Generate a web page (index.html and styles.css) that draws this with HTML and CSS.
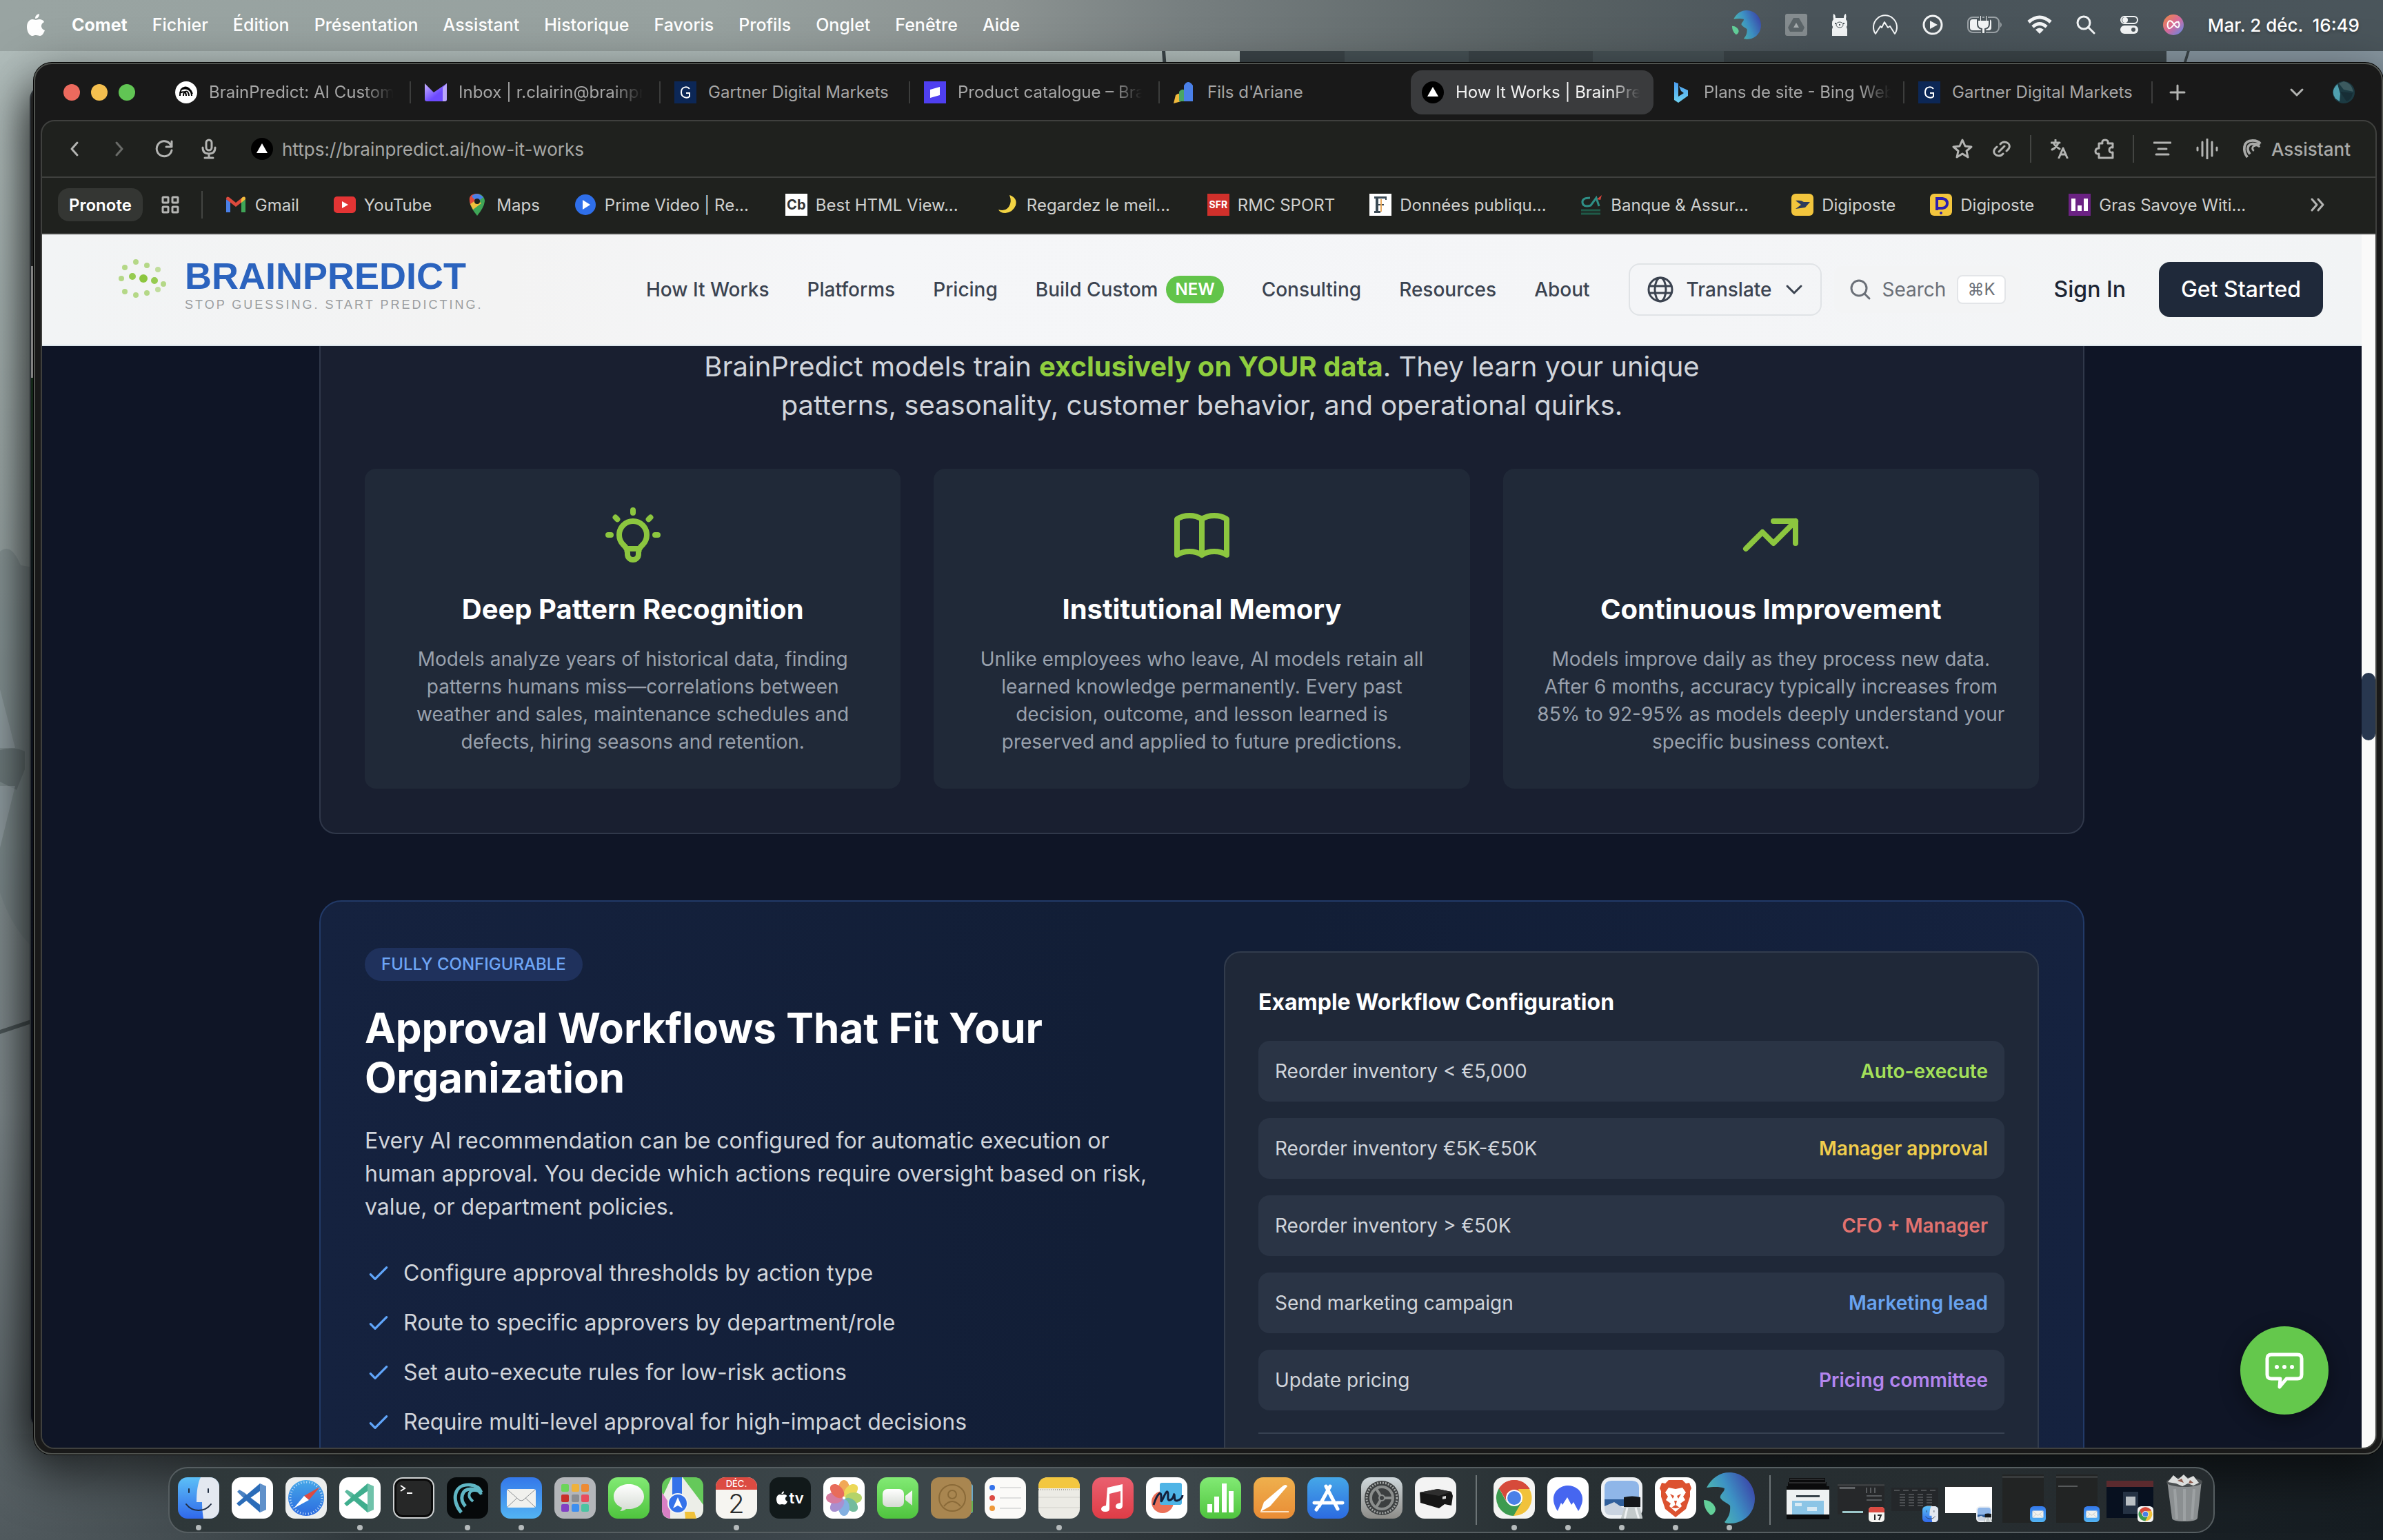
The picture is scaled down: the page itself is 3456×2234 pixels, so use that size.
FILE: index.html
```html
<!DOCTYPE html>
<html lang="fr">
<head>
<meta charset="utf-8">
<title>How It Works | BrainPredict</title>
<link rel="stylesheet" href="styles.css">
</head>
<body>

<svg class="defs" aria-hidden="true">
  <defs>
    <linearGradient id="g-blue" x1="0" y1="0" x2="0" y2="1"><stop offset="0" stop-color="#3478ea"/><stop offset="1" stop-color="#53b4f3"/></linearGradient>
    <linearGradient id="g-finder" x1="0" y1="0" x2="0" y2="1"><stop offset="0" stop-color="#5cc0f7"/><stop offset="1" stop-color="#3068ea"/></linearGradient>
    <linearGradient id="g-sky" x1="0" y1="0" x2="0" y2="1"><stop offset="0" stop-color="#45a7e8"/><stop offset="1" stop-color="#2c6be0"/></linearGradient>
    <linearGradient id="g-green" x1="0" y1="0" x2="0" y2="1"><stop offset="0" stop-color="#82ea74"/><stop offset="1" stop-color="#4fc43e"/></linearGradient>
    <linearGradient id="g-white" x1="0" y1="0" x2="0" y2="1"><stop offset="0" stop-color="#ffffff"/><stop offset="1" stop-color="#d5dbd3"/></linearGradient>
    <linearGradient id="g-red" x1="0" y1="0" x2="0" y2="1"><stop offset="0" stop-color="#ea6070"/><stop offset="1" stop-color="#df3c46"/></linearGradient>
    <linearGradient id="g-orange" x1="0" y1="0" x2="0" y2="1"><stop offset="0" stop-color="#efb04d"/><stop offset="1" stop-color="#e98c35"/></linearGradient>
    <linearGradient id="g-grey" x1="0" y1="0" x2="0" y2="1"><stop offset="0" stop-color="#cfd8dc"/><stop offset="1" stop-color="#8d8c88"/></linearGradient>
    <linearGradient id="g-comet" x1="0" y1=".7" x2="1" y2=".2"><stop offset="0" stop-color="#54c5a8"/><stop offset=".5" stop-color="#3d92c4"/><stop offset="1" stop-color="#3b3fa6"/></linearGradient>
    <linearGradient id="g-proton" x1="0" y1="0" x2="1" y2="1"><stop offset="0" stop-color="#c9b4ff"/><stop offset=".6" stop-color="#6d4aff"/></linearGradient>
    <linearGradient id="g-bing" x1="0" y1="0" x2="0" y2="1"><stop offset="0" stop-color="#4a9df0"/><stop offset="1" stop-color="#6fd3f2"/></linearGradient>
    <linearGradient id="g-siri" x1="0" y1="0" x2="1" y2="1"><stop offset="0" stop-color="#ef8b3c"/><stop offset=".5" stop-color="#d86a9c"/><stop offset="1" stop-color="#5a8ff0"/></linearGradient>
    <symbol id="comet-ball" viewBox="0 0 74 74">
      <path d="M4 22C12 7 24 0 37 0c21 0 37 17 37 38S58 74 38 74c-3 0-6 0-8-2 6-7 9-14 8-24-4-4-10-5-14-11-1-6 6-8 6-14-8-3-18-2-26-1z" fill="url(#g-comet)"/>
      <path d="M0 40c9 0 16 6 17 13 0 4-3 8-7 9C4 57 0 50 0 40z" fill="#63d09a"/>
    </symbol>
    <symbol id="swoosh" viewBox="0 0 32 32">
      <g fill="none" stroke="currentColor" stroke-width="4" stroke-linecap="butt"><path d="M10 29C3 20 2 3 18 3c6 0 10 2 12 5"/><path d="M14 24C8 17 10 9 18 8c5 0 8 0 11 2"/><path d="M20 19c-4-3-2-7 1-8s5-1 8 2" stroke-width="3"/></g>
    </symbol>
    <symbol id="vercel" viewBox="0 0 32 32"><circle cx="16" cy="16" r="16" fill="#000"/><path d="M16 8l8 14H8z" fill="#fff"/></symbol>
    <symbol id="gartner" viewBox="0 0 32 32"><path d="M0 0h32v32H0z" fill="#0c2756"/><path d="M22 11c-3-4-12-4-12 5 0 8 9 9 12 6v-5h-5" fill="none" stroke="#fff" stroke-width="2"/></symbol>
    <symbol id="apple" viewBox="0 0 26 32"><path d="M18 8c3 0 6 1 7 4-6 3-5 10 1 12-2 5-4 8-7 8-2 0-3-1-6-1s-3 1-5 1C3 32 0 25 0 19 0 12 4 8 8 8c2 0 4 1 5 1s3-1 5-1zM18 0c0 4-2 7-6 7 0-4 2-6 6-7z" fill="currentColor"/></symbol>
    <symbol id="vscode" viewBox="0 0 60 60"><rect width="60" height="60" rx="14" fill="#fff"/><path d="M41 9l9 4v34l-9 4-24-22 3-4 21 15V20L20 35 11 42l-4-4L41 9z" fill="currentColor"/><path d="M11 18l-3 3 12 12 21 18V40L18 22z" fill="currentColor" opacity=".85"/><path d="M41 9l9 4v34l-9 4z" fill="#fff" opacity=".25"/></symbol>
    <symbol id="mail" viewBox="0 0 60 60"><rect width="60" height="60" rx="14" fill="url(#g-blue)"/><rect x="9" y="17" width="42" height="27" rx="3" fill="#f1f1ee"/><path d="M10 18l17 15q3 2 6 0l17-15M10 43l14-13M50 43L36 30" fill="none" stroke="#8c9093" stroke-width="1"/></symbol>
    <symbol id="finder" viewBox="0 0 60 60"><rect width="60" height="60" rx="14" fill="url(#g-finder)"/><path d="M33 0h13c8 0 14 6 14 14v32c0 8-6 14-14 14H37c-1-8-2-14-2-24h-8C27 20 29 8 33 0z" fill="#e3e8f0"/><path d="M16 17v5M44 17v5M12 39c9 12 27 12 36 0" fill="none" stroke="#1f2c40" stroke-width="2" stroke-linecap="round"/></symbol>
    <symbol id="chrome" viewBox="0 0 60 60"><rect width="60" height="60" rx="14" fill="#f4f4f2"/><path d="M30 30L7.500 17A26 26 0 0 1 52.500 17z" fill="#d64a3a"/><path d="M8 16A26 26 0 0 0 30 56l11-20H19z" fill="#3d9b50"/><path d="M52 17A26 26 0 0 1 29 56l12-20-5-19z" fill="#f1c23b"/><path d="M30 17h22.500A26 26 0 0 0 8 16l11 19z" fill="#d64a3a"/><circle cx="30" cy="30" r="12" fill="#fff"/><circle cx="30" cy="30" r="10" fill="#4a80e8"/></symbol>
    <symbol id="preview" viewBox="0 0 60 60"><rect width="60" height="60" rx="14" fill="#eef1f4"/><path d="M5 15Q5 5 15 5h30q10 0 10 10v20H5z" fill="#8fb6e8"/><path d="M5 32h50v10H5z" fill="#2f5f9c"/><path d="M5 42l14-6 12 8 24-4v6q0 9-10 9H15Q5 55 5 46z" fill="#c9d3e0"/><path d="M33 29q12-3 24 0v14H33z" fill="#15181b"/><path d="M34 43h22l5 19q-15 4-33 0z" fill="#c3cacb"/><path d="M38 44l-4 17M50 44l5 17" stroke="#eef1f2" stroke-width="3"/></symbol>
  </defs>
</svg>

<svg class="wallpaper" viewBox="0 0 3456 2234" preserveAspectRatio="none" aria-hidden="true">
  <defs>
    <linearGradient id="w-sky" x1="0" y1="0" x2="0" y2="1"><stop offset="0" stop-color="#b3bfbd"/><stop offset=".3" stop-color="#9ba7a6"/><stop offset=".5" stop-color="#8a9697"/><stop offset=".58" stop-color="#808b8d"/><stop offset=".72" stop-color="#7d878a"/><stop offset="1" stop-color="#50595d"/></linearGradient>
    <linearGradient id="w-floor" x1="0" y1="0" x2="1" y2="0"><stop offset="0" stop-color="#3d464a" stop-opacity="0"/><stop offset=".15" stop-color="#30383c"/><stop offset=".35" stop-color="#3d464c"/><stop offset=".55" stop-color="#242b2e"/><stop offset="1" stop-color="#161d22"/></linearGradient>
  </defs>
  <path d="M0 0h3456v2234H0z" fill="url(#w-sky)"/>
  <path d="M0 800q16-14 30 20l30 5v560q-40-30-60-90z" fill="#6f7c80" opacity=".4"/>
  <path d="M0 1088q20-6 36 2v26l-12 30-24-12z" fill="#515d60" opacity=".4"/>
  <path d="M0 1000l22 85H0zM0 1140l22 0L0 1230z" fill="#a0acb2" opacity=".5"/>
  <path d="M0 1494l60-20v6L0 1500z" fill="#4b5557"/>
  <path d="M1798 60h1344v40H1798z" fill="#3b4448"/>
  <path d="M1950 60h180v40h-180zM2310 60h190v40h-190z" fill="#465155"/>
  <path d="M3142 60h314v300h-314z" fill="#8796a0"/>
  <path d="M1684 60h5l3 40h-5zM3176 60h4l-12 40h-4z" fill="#3b4448"/>
  <path d="M0 2080h3456v154H0z" fill="url(#w-floor)"/>
</svg>

<div class="desktop">
  <header class="menubar">
    <nav class="menus" aria-label="Menus">
      <button aria-label="Apple"><svg class="apple" viewBox="0 0 26 32"><use href="#apple"/></svg></button>
      <button class="strong">Comet</button>
      <button>Fichier</button>
      <button>Édition</button>
      <button>Présentation</button>
      <button>Assistant</button>
      <button>Historique</button>
      <button>Favoris</button>
      <button>Profils</button>
      <button>Onglet</button>
      <button>Fenêtre</button>
      <button>Aide</button>
    </nav>
    <div class="status">
      <svg width="42" height="42"><use href="#comet-ball"/></svg>
      <svg width="32" height="32" viewBox="0 0 32 32"><rect width="32" height="32" rx="3" fill="#858c8f"/><path d="M12 6h8l8 14-3 6H7l-3-6z" fill="#5b6468"/><path d="M16 13l4 7h-8z" fill="#a6acae"/></svg>
      <svg width="24" height="34" viewBox="0 0 24 34" fill="#f2f4f5"><path d="M3 1q3 1 3 6h12q0-5 3-6 1 4 0 8 2 2 2 6v3q-2 2 0 5v10H1V23q2-3 0-5v-3q0-4 2-6-1-4 0-8z"/><ellipse cx="12" cy="17" rx="5" ry="4" fill="none" stroke="#4c565b" stroke-width="1"/><path d="M5 14h2v2H5zM17 14h2v2h-2zM11 16h2v2h-2z" fill="#4c565b"/></svg>
      <svg width="38" height="30" viewBox="0 0 38 30" fill="none" stroke="#f2f4f5" stroke-width="2"><path d="M5 28A17 17 0 1 1 33 28L26 17l-3 2-5-8-4 8-2-2z" stroke-linejoin="round"/></svg>
      <svg width="30" height="30" viewBox="0 0 30 30"><circle cx="15" cy="15" r="13" fill="none" stroke="#f2f4f5" stroke-width="3"/><path d="M11 9l11 6-11 6z" fill="#f2f4f5"/></svg>
      <svg width="52" height="30" viewBox="0 0 52 30"><rect x="1" y="4" width="45" height="22" rx="7" fill="none" stroke="#9ba2a6" stroke-width="2"/><path d="M48 11q4 4 0 8z" fill="#9ba2a6"/><rect x="4" y="7" width="31" height="16" rx="4" fill="#f2f4f5"/><path d="M18 1v7h-3v6q0 6 6 7v7h5v-7q6-1 6-7V8h-3V1h-3v7h-5V1z" fill="#f2f4f5" stroke="#4c565b" stroke-width="2"/></svg>
      <svg width="36" height="28" viewBox="0 0 36 28" fill="none" stroke="#f2f4f5" stroke-width="5"><path d="M2 10q16-14 32 0M8 17q10-9 20 0"/><path d="M12 21q6-5 12 0l-6 6z" fill="#f2f4f5" stroke="none"/></svg>
      <svg width="28" height="28" viewBox="0 0 28 28" fill="none" stroke="#f2f4f5" stroke-width="3"><circle cx="11" cy="11" r="9"/><path d="M18 18l8 8" stroke-linecap="round"/></svg>
      <svg width="28" height="28" viewBox="0 0 28 28"><rect x="2" y="2" width="24" height="10" rx="5" fill="none" stroke="#f2f4f5" stroke-width="2"/><circle cx="8" cy="7" r="4" fill="#f2f4f5"/><rect x="1" y="15" width="26" height="12" rx="6" fill="#f2f4f5"/><circle cx="20" cy="21" r="3" fill="#4c565b"/></svg>
      <svg width="30" height="30" viewBox="0 0 30 30"><circle cx="15" cy="15" r="15" fill="url(#g-siri)"/><path d="M8 10c6-4 8 9 14 9M8 20c6 2 8-11 14-9M8 10q-3 5 0 10M22 10q3 5 0 9" fill="none" stroke="#fff" stroke-width="2"/></svg>
      <time>Mar. 2 déc.&ensp;16:49</time>
    </div>
  </header>

  <main class="stage">
    <div class="back-window" aria-hidden="true"></div>
    <section class="window">
      <div class="tabstrip">
        <div class="lights"><button class="red" aria-label="Fermer"></button><button class="amber" aria-label="Réduire"></button><button class="lime" aria-label="Agrandir"></button></div>
        <div class="tabs">
          <button class="tab ruled"><svg viewBox="0 0 32 32"><circle cx="16" cy="16" r="16" fill="#fff"/><path d="M7 21C6 6 20 4 25 18M12 21c0-8 7-9 8 0M8 12c8-4 16 0 16 9M7 17c6-4 9-1 9 4" fill="none" stroke="#000" stroke-width="2"/></svg><span>BrainPredict: AI Custom</span></button>
          <button class="tab ruled"><svg viewBox="0 0 32 32"><path d="M0 3l13 13L32 3v23q0 3-3 3H3q-3 0-3-3z" fill="url(#g-proton)"/><path d="M26 9l6-6v23q0 3-3 3h-3z" fill="#b9a5fb"/></svg><span>Inbox | r.clairin@brainpr</span></button>
          <button class="tab ruled whole"><svg viewBox="0 0 32 32"><use href="#gartner"/></svg><span>Gartner Digital Markets</span></button>
          <button class="tab ruled"><svg viewBox="0 0 32 32"><path d="M0 0h32v32H0z" fill="#4f3ff0"/><path d="M9 12l14-4v12L9 24z" fill="#fff"/></svg><span>Product catalogue – Bra</span></button>
          <button class="tab whole"><svg viewBox="0 0 32 32"><path d="M0 32l3-12q5-4 8-1v10z" fill="#f0b93c"/><path d="M8 29V15q5-6 9-1v15z" fill="#4aa564"/><path d="M15 29V6q6-10 13 0v23z" fill="#4a80e8"/></svg><span>Fils d'Ariane</span></button>
          <button class="tab active"><svg viewBox="0 0 32 32"><use href="#vercel"/></svg><span>How It Works | BrainPre</span></button>
          <button class="tab ruled"><svg viewBox="0 0 32 32"><path d="M6 1l6 2v19l8-5-4-3-3-7 13 6v8L12 31l-6-4z" fill="url(#g-bing)"/></svg><span>Plans de site - Bing Web</span></button>
          <button class="tab ruled whole"><svg viewBox="0 0 32 32"><use href="#gartner"/></svg><span>Gartner Digital Markets</span></button>
        </div>
        <button class="icon" aria-label="Nouvel onglet"><svg width="24" height="24" viewBox="0 0 24 24"><path d="M12 2v20M2 12h20"/></svg></button>
        <button class="icon push" aria-label="Onglets"><svg width="24" height="24" viewBox="0 0 24 24"><path d="M4 8l8 8 8-8"/></svg></button>
        <button class="icon profile" aria-label="Profil"><svg width="32" height="32" viewBox="0 0 32 32"><g stroke="none"><circle cx="16" cy="16" r="16" fill="#1c3a42"/><path d="M7 4Q-4 14 4 25l6 4 1-11z" fill="#4f9fae"/><path d="M9 3l7 9 14 3Q27 2 16 0z" fill="#3c5a5f"/><path d="M11 15l18 2q-2 10-9 12z" fill="#172e36"/></g></svg></button>
      </div>

      <div class="chrome">
        <div class="toolbar">
          <button class="icon" aria-label="Précédent"><svg width="24" height="24" viewBox="0 0 24 24"><path d="M16 3l-8 9 8 9"/></svg></button>
          <button class="icon dim" aria-label="Suivant"><svg width="24" height="24" viewBox="0 0 24 24"><path d="M8 3l8 9-8 9"/></svg></button>
          <button class="icon" aria-label="Recharger"><svg width="26" height="26" viewBox="0 0 26 26"><path d="M24 15A11 11 0 1 1 21 5l3 4M24 2v8h-8"/></svg></button>
          <button class="icon" aria-label="Micro"><svg width="24" height="30" viewBox="0 0 24 30"><rect x="8" y="2" width="8" height="15" rx="4"/><path d="M3 13q0 9 9 9t9-9M12 22v6M6 28h12"/></svg></button>
          <label class="address"><svg width="32" height="32"><use href="#vercel"/></svg><input type="url" aria-label="Adresse" value="https://brainpredict.ai/how-it-works"></label>
          <button class="icon tight" aria-label="Favori"><svg width="30" height="30" viewBox="0 0 30 30"><path d="M15 2l4 9 9 1-7 6 2 9-8-5-8 5 2-9-7-6 9-1z"/></svg></button>
          <button class="icon" aria-label="Copier le lien"><svg width="26" height="26" viewBox="0 0 26 26"><path d="M9 17l8-8M11 6c5-6 15-2 13 5-1 3-3 4-4 5M15 20c-5 6-15 2-13-5 1-3 3-4 4-5"/></svg></button>
          <i class="rule"></i>
          <button class="icon" aria-label="Traduire"><svg width="26" height="28" viewBox="0 0 26 28"><path d="M1 5h12M7 1v4M11 5q-2 7-9 10M4 5q2 5 9 9M12 27l6-14 6 14M14 22h8"/></svg></button>
          <button class="icon" aria-label="Extensions"><svg width="30" height="30" viewBox="0 0 30 30"><path d="M7 7h5q-1-5 4-5t4 5h7v6q-5-1-5 3.500T27 20v8H7v-6q-5 1-5-3.500T7 14z"/></svg></button>
          <i class="rule"></i>
          <button class="icon" aria-label="Résumer"><svg width="26" height="24" viewBox="0 0 26 24"><path d="M1 3h24M7 12h12M4 20h18"/></svg></button>
          <button class="icon" aria-label="Voix"><svg width="32" height="30" viewBox="0 0 32 30"><path d="M2 13v4M9 5v20M16 1v28M23 5v20M30 13v4"/></svg></button>
          <button class="assistant"><svg width="30" height="30"><use href="#swoosh"/></svg>Assistant</button>
        </div>
        <nav class="bookmarks" aria-label="Favoris">
          <button class="pill">Pronote</button>
          <button class="icon" aria-label="Applications"><svg width="26" height="26" viewBox="0 0 26 26"><rect x="2" y="2" width="8" height="8" rx="1"/><rect x="16" y="2" width="8" height="8" rx="1"/><rect x="2" y="16" width="8" height="8" rx="1"/><rect x="16" y="16" width="8" height="8" rx="1"/></svg></button>
          <i class="rule"></i>
          <a href="#"><svg viewBox="0 0 32 32"><path d="M2 27V8l6 4v15z" fill="#4a80e8"/><path d="M24 27V12l6-4v19z" fill="#3fa557"/><path d="M2 8q0-5 4-3l10 8 10-8q4-2 4 3l-14 11z" fill="#dd4a3d"/><path d="M24 7l2-2q4-2 4 3l-6 5z" fill="#f0bf3c"/></svg><span>Gmail</span></a>
          <a href="#"><svg viewBox="0 0 32 32"><rect y="4" width="32" height="24" rx="5" fill="#e33434"/><path d="M12 11l9 5-9 5z" fill="#fff"/></svg><span>YouTube</span></a>
          <a href="#"><svg viewBox="0 0 32 32"><path d="M16 32Q6 20 5 11A11 11 0 0 1 27 11Q26 20 16 32z" fill="#3fa557"/><path d="M6 15Q1 0 16 0l4 1L8 19z" fill="#e0483c"/><path d="M8 4q7-8 17 1l-9 7z" fill="#4a80e8"/><path d="M6 15l10-7 6 6-12 9z" fill="#f0bf3c"/><circle cx="16" cy="11" r="4" fill="#1f211f"/></svg><span>Maps</span></a>
          <a href="#"><svg viewBox="0 0 32 32"><circle cx="16" cy="16" r="15" fill="#2f6fea"/><path d="M12 9l11 7-11 7z" fill="#fff"/></svg><span class="cut">Prime Video | Re...</span></a>
          <a href="#"><i class="cb">Cb</i><span class="cut">Best HTML View...</span></a>
          <a href="#"><svg viewBox="0 0 32 32"><path d="M19 2q12 4 9 15-4 10-15 11-8 0-10-5 10 3 15-4t1-17z" fill="#f3d443"/></svg><span class="cut">Regardez le meil...</span></a>
          <a href="#"><i class="sfr">SFR</i><span>RMC SPORT</span></a>
          <a href="#"><svg viewBox="0 0 32 32"><path d="M0 0h32v32H0z" fill="#fff"/><path d="M7 4h18v5h-2V7H13v8h8v2h-8v8h3v3H7v-3h2V7H7z" fill="#3a4a55"/><path d="M17 8v18" stroke="#e9a85a" stroke-width="2"/></svg><span class="cut">Données publiqu...</span></a>
          <a href="#"><svg viewBox="0 0 32 32"><path d="M14 6Q2 6 3 13t12 4l8-11 4 12" fill="none" stroke="#2f8f86" stroke-width="3"/><path d="M24 8l7-6-2 7z" fill="#d8443c"/><path d="M1 24h28M1 29h28" stroke="#1f5a48" stroke-width="3"/></svg><span class="cut">Banque &amp; Assur...</span></a>
          <a href="#"><svg viewBox="0 0 32 32"><rect width="32" height="32" rx="6" fill="#f2c53d"/><path d="M6 10q8-1 12 2h9l-7 8-14 2 8-6z" fill="#2d3a5c"/></svg><span>Digiposte</span></a>
          <a href="#"><svg viewBox="0 0 32 32"><rect width="32" height="32" rx="6" fill="#f2c53d"/><path d="M10 24V7h8q7 1 7 7t-7 7h-6" fill="none" stroke="#2b1fb0" stroke-width="4"/><circle cx="16" cy="28" r="2" fill="#2b1fb0"/></svg><span>Digiposte</span></a>
          <a href="#"><svg viewBox="0 0 32 32"><path d="M0 0h32v32H0z" fill="#6b2283"/><path d="M4 7h6v18H4zM13 17h6v8h-6zM22 7h6v18h-6z" fill="#fff"/></svg><span>Gras Savoye Witi...</span></a>
          <button class="icon push more" aria-label="Plus de favoris"><svg width="24" height="24" viewBox="0 0 24 24"><path d="M4 4l7 8-7 8M13 4l7 8-7 8"/></svg></button>
        </nav>

        <div class="viewport">
          <article class="page" lang="en">
            <header class="site">
              <a class="brand" href="#">
                <svg width="70" height="60" viewBox="0 0 70 60" fill="#8cc63f"><g opacity=".6"><circle cx="25" cy="6" r="4"/><circle cx="41" cy="11" r="4"/><circle cx="9" cy="14" r="4"/><circle cx="57" cy="17" r="4" opacity=".8"/><circle cx="4" cy="30" r="4"/><circle cx="65" cy="38" r="4"/><circle cx="57" cy="46" r="4" opacity=".8"/><circle cx="9" cy="49" r="4"/><circle cx="25" cy="54" r="4"/><circle cx="41" cy="51" r="4"/></g><circle cx="20" cy="27" r="5" opacity=".9"/><circle cx="36" cy="30" r="6"/><circle cx="52" cy="33" r="5" opacity=".9"/></svg>
                <span class="words"><b>BRAINPREDICT</b><small>STOP GUESSING. START PREDICTING.</small></span>
              </a>
              <nav class="sitenav" aria-label="Site">
                <a href="#">How It Works</a>
                <a href="#">Platforms</a>
                <a href="#">Pricing</a>
                <a href="#">Build Custom<em>NEW</em></a>
                <a href="#">Consulting</a>
                <a href="#">Resources</a>
                <a href="#">About</a>
              </nav>
              <button class="translate"><svg width="40" height="40" viewBox="0 0 40 40" stroke-width="3"><circle cx="20" cy="20" r="17"/><ellipse cx="20" cy="20" rx="8" ry="17"/><path d="M4 15h32M4 25h32"/></svg>Translate<svg width="28" height="28" viewBox="0 0 28 28" stroke-width="3"><path d="M4 9l10 10 10-10"/></svg></button>
              <button class="search"><svg width="32" height="32" viewBox="0 0 32 32" stroke-width="3"><circle cx="14" cy="14" r="11"/><path d="M22 22l7 7"/></svg>Search<kbd>⌘K</kbd></button>
              <a class="signin" href="#">Sign In</a>
              <button class="start">Get Started</button>
            </header>

            <div class="sections">
              <section class="learn">
                <p class="lead">BrainPredict models train <strong>exclusively on YOUR data</strong>. They learn your unique patterns, seasonality, customer behavior, and operational quirks.</p>
                <div class="features">
                  <div class="feature">
                    <svg viewBox="0 0 24 24"><path d="M9.663 17h4.673M12 3v1m6.364 1.636l-.707.707M21 12h-1M4 12H3m3.343-5.657l-.707-.707m2.828 9.900a5 5 0 117.072 0l-.548.547A3.374 3.374 0 0014 18.469V19a2 2 0 11-4 0v-.531c0-.895-.356-1.754-.988-2.386l-.548-.547z"/></svg>
                    <h3>Deep Pattern Recognition</h3>
                    <p>Models analyze years of historical data, finding patterns humans miss—correlations between weather and sales, maintenance schedules and defects, hiring seasons and retention.</p>
                  </div>
                  <div class="feature">
                    <svg viewBox="0 0 24 24"><path d="M12 6.253v13m0-13C10.832 5.477 9.246 5 7.500 5S4.168 5.477 3 6.253v13C4.168 18.477 5.754 18 7.500 18s3.332.477 4.500 1.253m0-13C13.168 5.477 14.754 5 16.500 5c1.747 0 3.332.477 4.500 1.253v13C19.832 18.477 18.247 18 16.500 18c-1.746 0-3.332.477-4.500 1.253"/></svg>
                    <h3>Institutional Memory</h3>
                    <p>Unlike employees who leave, AI models retain all learned knowledge permanently. Every past decision, outcome, and lesson learned is preserved and applied to future predictions.</p>
                  </div>
                  <div class="feature">
                    <svg viewBox="0 0 24 24"><path d="M13 7h8m0 0v8m0-8l-8 8-4-4-6 6"/></svg>
                    <h3>Continuous Improvement</h3>
                    <p>Models improve daily as they process new data. After 6 months, accuracy typically increases from 85% to 92-95% as models deeply understand your specific business context.</p>
                  </div>
                </div>
              </section>

              <section class="approval">
                <div class="copy">
                  <span class="chip">FULLY CONFIGURABLE</span>
                  <h2>Approval Workflows That Fit Your Organization</h2>
                  <p>Every AI recommendation can be configured for automatic execution or human approval. You decide which actions require oversight based on risk, value, or department policies.</p>
                  <ul>
                    <li><svg viewBox="0 0 24 24"><path d="M5 13l4 4L19 7"/></svg>Configure approval thresholds by action type</li>
                    <li><svg viewBox="0 0 24 24"><path d="M5 13l4 4L19 7"/></svg>Route to specific approvers by department/role</li>
                    <li><svg viewBox="0 0 24 24"><path d="M5 13l4 4L19 7"/></svg>Set auto-execute rules for low-risk actions</li>
                    <li><svg viewBox="0 0 24 24"><path d="M5 13l4 4L19 7"/></svg>Require multi-level approval for high-impact decisions</li>
                  </ul>
                </div>
                <div class="example">
                  <h4>Example Workflow Configuration</h4>
                  <dl>
                    <div><dt>Reorder inventory &lt; €5,000</dt><dd class="c-green">Auto-execute</dd></div>
                    <div><dt>Reorder inventory €5K-€50K</dt><dd class="c-yellow">Manager approval</dd></div>
                    <div><dt>Reorder inventory &gt; €50K</dt><dd class="c-red">CFO + Manager</dd></div>
                    <div><dt>Send marketing campaign</dt><dd class="c-blue">Marketing lead</dd></div>
                    <div><dt>Update pricing</dt><dd class="c-purple">Pricing committee</dd></div>
                  </dl>
                </div>
              </section>
            </div>
            <button class="chat" aria-label="Chat"><svg width="60" height="60" viewBox="0 0 60 60"><path d="M11 7h38q6 0 6 6v23q0 6-6 6H33l-10 12 1-12H11q-6 0-6-6V13q0-6 6-6z" fill="none" stroke="#fff" stroke-width="5" stroke-linejoin="round"/><g fill="#fff"><circle cx="19" cy="25" r="3"/><circle cx="30" cy="25" r="3"/><circle cx="41" cy="25" r="3"/></g></svg></button>
          </article>
          <div class="scrollbar"><i></i></div>
        </div>
      </div>
    </section>
  </main>

  <nav class="dock" aria-label="Dock">
    <button class="on" aria-label="Finder"><svg><use href="#finder"/></svg></button>
    <button aria-label="Code"><svg color="#2b6cb8"><use href="#vscode"/></svg></button>
    <button aria-label="Safari"><svg viewBox="0 0 60 60"><rect width="60" height="60" rx="14" fill="#eceeee"/><circle cx="30" cy="30" r="26" fill="url(#g-sky)"/><circle cx="30" cy="30" r="23" fill="none" stroke="#cfe6fa" stroke-width="3" stroke-dasharray="1 3"/><path d="M50 14L34 33l-7-6z" fill="#dc4b42"/><path d="M12 45l15-18 7 6z" fill="#fff"/></svg></button>
    <button class="on" aria-label="Code Insiders"><svg color="#3fae8e"><use href="#vscode"/></svg></button>
    <button aria-label="Terminal"><svg viewBox="0 0 60 60"><rect width="60" height="60" rx="14" fill="#cfd2d3"/><rect x="2" y="2" width="56" height="56" rx="12" fill="#0a0a0a"/><rect x="5" y="5" width="50" height="50" rx="9" fill="#262727"/><path d="M11 12l6 4-6 4M20 23h8" fill="none" stroke="#fff" stroke-width="2"/></svg></button>
    <button class="on" aria-label="Perplexity"><svg viewBox="0 0 60 60"><rect width="60" height="60" rx="14" fill="#06090a"/><g fill="none" stroke="#5fb6c4" stroke-width="5"><path d="M21 51C6 34 10 9 34 11c8 1 14 5 16 11"/><path d="M27 42C18 32 21 17 35 17c6 0 12 2 14 6"/><path d="M38 35c-10-8-5-16 2-16 5 0 8 1 10 6" stroke-width="4"/></g></svg></button>
    <button class="on" aria-label="Mail"><svg><use href="#mail"/></svg></button>
    <button aria-label="Launchpad"><svg viewBox="0 0 60 60"><rect width="60" height="60" rx="14" fill="#b3b6ba"/><g><rect x="10" y="10" width="11" height="11" rx="2" fill="#6cd45a"/><rect x="25" y="10" width="11" height="11" rx="2" fill="#efb13c"/><rect x="39" y="10" width="11" height="11" rx="2" fill="#ee8b33"/><rect x="10" y="25" width="11" height="11" rx="2" fill="#c9302a"/><rect x="25" y="25" width="11" height="11" rx="2" fill="#8b8e92"/><rect x="39" y="25" width="11" height="11" rx="2" fill="#e84d5e"/><rect x="10" y="39" width="11" height="11" rx="2" fill="#8240c4"/><rect x="25" y="39" width="11" height="11" rx="2" fill="#3e8ff0"/><rect x="39" y="39" width="11" height="11" rx="2" fill="#4cc3a2"/></g></svg></button>
    <button aria-label="Messages"><svg viewBox="0 0 60 60"><rect width="60" height="60" rx="14" fill="url(#g-green)"/><path d="M30 10c13 0 22 8 22 18S43 46 30 46l-4 0q-3 3-9 3 3-2 3-5C12 41 8 35 8 28c0-10 9-18 22-18z" fill="url(#g-white)"/></svg></button>
    <button aria-label="Plans"><svg viewBox="0 0 60 60"><rect width="60" height="60" rx="14" fill="#65c95a"/><path d="M14 0h16l30 40v6q0 14-14 14H14Q0 60 0 46V30z" fill="#eceee8"/><path d="M0 22l12 18v20Q0 58 0 46z" fill="#d97fc4"/><path d="M38 0h8q14 0 14 14v24z" fill="#65c95a"/><path d="M33 50h14l3 10H34z" fill="#f1c23b"/><path d="M15 0h14v30H15z" fill="#3472ea"/><circle cx="23" cy="38" r="14" fill="#3472ea" stroke="#f4f5f5" stroke-width="2"/><path d="M23 29l7 16-7-4-7 4z" fill="#fff"/></svg></button>
    <button class="on" aria-label="Calendrier"><span class="cal"><small>DÉC.</small><b>2</b></span></button>
    <button aria-label="TV"><span class="tv"><svg viewBox="0 0 26 32"><use href="#apple"/></svg>tv</span></button>
    <button aria-label="Photos"><svg viewBox="0 0 60 60"><rect width="60" height="60" rx="14" fill="#fff"/><g opacity=".85"><ellipse cx="30" cy="16" rx="8" ry="12" fill="#ef9a3a"/><ellipse cx="30" cy="16" rx="8" ry="12" fill="#e9d23c" transform="rotate(45 30 30)"/><ellipse cx="30" cy="16" rx="8" ry="12" fill="#a8cc50" transform="rotate(90 30 30)"/><ellipse cx="30" cy="16" rx="8" ry="12" fill="#5bb08c" transform="rotate(135 30 30)"/><ellipse cx="30" cy="16" rx="8" ry="12" fill="#6ea3dc" transform="rotate(180 30 30)"/><ellipse cx="30" cy="16" rx="8" ry="12" fill="#9a7cc8" transform="rotate(225 30 30)"/><ellipse cx="30" cy="16" rx="8" ry="12" fill="#d0648f" transform="rotate(270 30 30)"/><ellipse cx="30" cy="16" rx="8" ry="12" fill="#e5533f" transform="rotate(315 30 30)"/></g></svg></button>
    <button aria-label="FaceTime"><svg viewBox="0 0 60 60"><rect width="60" height="60" rx="14" fill="url(#g-green)"/><rect x="8" y="17" width="31" height="26" rx="7" fill="url(#g-white)"/><path d="M41 27l10-8v22l-10-8z" fill="url(#g-white)"/></svg></button>
    <button aria-label="Contacts"><svg viewBox="0 0 60 60"><rect x="52" y="10" width="9" height="42" rx="3" fill="#6aa9c9"/><path d="M54 34h7v16h-7z" fill="#62b454"/><rect width="59" height="60" rx="12" fill="#a98650"/><g fill="none" stroke="#8a6a38" stroke-width="2"><circle cx="31" cy="30" r="19"/><circle cx="31" cy="25" r="6"/><path d="M19 42q12-14 24 0"/></g></svg></button>
    <button aria-label="Rappels"><svg viewBox="0 0 60 60"><rect width="60" height="60" rx="14" fill="#fbfaf8"/><path d="M22 15h31M22 30h31M22 45h31" stroke="#c2c4c4" stroke-width="1"/><circle cx="11" cy="15" r="4" fill="#3472ea"/><circle cx="11" cy="30" r="4" fill="#dc4b42"/><circle cx="11" cy="45" r="4" fill="#ee9838"/></svg></button>
    <button class="on" aria-label="Notes"><svg viewBox="0 0 60 60"><rect width="60" height="60" rx="14" fill="#ecebe5"/><path d="M0 16v-2Q0 0 14 0h32q14 0 14 14v2z" fill="#f3c740"/><path d="M0 29h60M0 44h60" stroke="#d2d1cb" stroke-width="1"/><path d="M0 18h60" stroke="#a9a79f" stroke-width="2" stroke-dasharray="1 2"/></svg></button>
    <button aria-label="Musique"><svg viewBox="0 0 60 60"><rect width="60" height="60" rx="14" fill="url(#g-red)"/><path d="M22 15l22-5v31q0 5-5 5t-5-4 7-5V20l-16 4v22q0 4-6 4t-6-4 7-5z" fill="#fff"/></svg></button>
    <button aria-label="Freeform"><svg viewBox="0 0 60 60"><rect width="60" height="60" rx="14" fill="#fff"/><circle cx="24" cy="36" r="16" fill="#ec7058"/><rect x="20" y="8" width="32" height="32" rx="3" fill="#4fb4e6"/><path d="M11 40c6-18 12-22 11-9s6-12 9-10-2 14 4 12 5-10 6-8-1 10 4 9 8-5 8-8" fill="none" stroke="#14203c" stroke-width="3"/></svg></button>
    <button aria-label="Numbers"><svg viewBox="0 0 60 60"><rect width="60" height="60" rx="14" fill="url(#g-green)"/><path d="M11 39h7v12h-7zM21 28h7v23h-7zM32 9h7v42h-7zM42 20h7v31h-7z" fill="#fff"/></svg></button>
    <button aria-label="Pages"><svg viewBox="0 0 60 60"><rect width="60" height="60" rx="14" fill="url(#g-orange)"/><path d="M10 50l5-14L42 13q5-4 7 0L24 42z" fill="#fff"/><path d="M10 50h41" stroke="#fbe1c2" stroke-width="2"/></svg></button>
    <button aria-label="App Store"><svg viewBox="0 0 60 60"><rect width="60" height="60" rx="14" fill="url(#g-sky)"/><path d="M33 13L17 42M27 13l17 33M10 37h27M43 37h8M15 44l-2 3" stroke="#fff" stroke-width="5" stroke-linecap="round"/></svg></button>
    <button aria-label="Réglages"><svg viewBox="0 0 60 60"><rect width="60" height="60" rx="14" fill="url(#g-grey)"/><circle cx="30" cy="30" r="25" fill="#3c3f40"/><circle cx="30" cy="30" r="22" fill="none" stroke="#a4a7a6" stroke-width="3" stroke-dasharray="2 2"/><circle cx="30" cy="30" r="16" fill="none" stroke="#8b8e8d" stroke-width="4"/><path d="M30 30h17M30 30l-9-15M30 30l-9 15" stroke="#8b8e8d" stroke-width="4"/><circle cx="30" cy="30" r="4" fill="#3c3f40" stroke="#8b8e8d" stroke-width="2"/></svg></button>
    <button aria-label="Scanner"><svg viewBox="0 0 60 60"><rect width="60" height="60" rx="14" fill="#f3f3f3"/><path d="M7 22l26-5 20 4 2 6-2 14-10-2-8 6L8 37z" fill="#161616"/><path d="M7 22l26-5 20 4-18 6z" fill="#2e2e2e"/><path d="M40 28l5-1v4l-5 1z" fill="#d7d7d7"/></svg></button>
    <i class="split"></i>
    <button class="on" aria-label="Chrome"><svg><use href="#chrome"/></svg></button>
    <button class="on" aria-label="VPN"><svg viewBox="0 0 60 60"><rect width="60" height="60" rx="14" fill="#fff"/><path d="M15 49C0 26 16 12 30 12s30 14 15 37L38 36l-3 4-6-11-7 11-2-3z" fill="#4666f0"/></svg></button>
    <button class="on" aria-label="Aperçu"><svg><use href="#preview"/></svg></button>
    <button class="on" aria-label="Brave"><svg viewBox="0 0 60 60"><rect width="60" height="60" rx="14" fill="#fff"/><path d="M20 4h20l5 5 5-1 3 8-2 4 0 8-6 18-15 12-15-12-6-18 0-8-2-4 3-8 5 1z" fill="#dc5230"/><path d="M20 15l10 2 10-2 5 7-4 6 3 5-7 5 2 4-9 8-9-8 2-4-7-5 3-5-4-6z" fill="#fff"/><path d="M22 24l6 3-2 4zM38 24l-6 3 2 4zM28 34h4l-2 8zM24 44l6-4 6 4-6 1z" fill="#dc5230"/></svg></button>
    <button class="on big" aria-label="Comet"><svg><use href="#comet-ball"/></svg></button>
    <i class="split"></i>
    <button class="min" aria-label="Fenêtre réduite"><svg viewBox="0 0 70 70"><path d="M8 6h52v6H8zM6 12h56v6H6zM4 18h62v48H4z" fill="#0a0b0c"/><path d="M9 8h50M7 13h54" stroke="#4a4d4f" stroke-width="1"/><path d="M4 23h62v36H4z" fill="#eef1f2"/><path d="M12 39h46v20H12z" fill="#8cc5e6"/><path d="M16 42h10v5H16zM34 48h14v6H34z" fill="#d8eaf4"/><path d="M18 31h34v3H18z" fill="#37424a"/></svg></button>
    <button class="min" aria-label="Fenêtre réduite"><svg viewBox="0 0 70 70"><path d="M0 15h68v44H0z" fill="#26282a"/><path d="M0 15h68v3H0z" fill="#3a3d3f"/><path d="M3 20h22v1H3zM42 20v8M48 20v8M54 20v8M42 32h22M42 38h22" stroke="#8b8f92" stroke-width="1" fill="none"/><path d="M7 54h30v3H7z" fill="#9cc7ca"/><rect x="45" y="48" width="23" height="22" rx="5" fill="#f5f4f1"/><path d="M45 56v-3q0-5 5-5h13q5 0 5 5v3z" fill="#dc4b42"/><path d="M54 59v8M58 60h5l-3 7" stroke="#26282a" stroke-width="2" fill="none"/></svg></button>
    <button class="min" aria-label="Fenêtre réduite"><svg viewBox="0 0 70 70"><path d="M0 20h68v34H0z" fill="#24272a"/><path d="M4 24h60M12 30h52M12 34h52M12 38h52M12 42h52M12 46h52" stroke="#74787b" stroke-width="1" stroke-dasharray="8 5"/><use href="#finder" x="45" y="47" width="23" height="23"/></svg></button>
    <button class="min" aria-label="Fenêtre réduite"><svg viewBox="0 0 70 70"><path d="M0 17h68v40H0z" fill="#fff"/><path d="M0 17h68v2H0z" fill="#2b2d2e"/><use href="#preview" x="45" y="47" width="23" height="23"/></svg></button>
    <button class="min" aria-label="Fenêtre réduite"><svg viewBox="0 0 70 70"><path d="M5 1h60v70H5z" fill="#222424"/><path d="M5 3h60v3H5z" fill="#383b3c"/><use href="#mail" x="45" y="47" width="23" height="23"/></svg></button>
    <button class="min" aria-label="Fenêtre réduite"><svg viewBox="0 0 70 70"><path d="M5 1h60v70H5z" fill="#222424"/><path d="M5 3h60v3H5z" fill="#383b3c"/><path d="M8 18h28" stroke="#8b8f92" stroke-width="1"/><use href="#mail" x="45" y="47" width="23" height="23"/></svg></button>
    <button class="min" aria-label="Fenêtre réduite"><svg viewBox="0 0 70 70"><path d="M0 10h68v54H0z" fill="#07101f"/><path d="M0 10h68v9H0z" fill="#5b2a2e"/><path d="M24 26h22v32H24z" fill="#253244"/><path d="M28 33h14v13H28z" fill="#b9bfc4"/><use href="#chrome" x="45" y="47" width="23" height="23"/></svg></button>
    <button class="min" aria-label="Corbeille"><svg viewBox="0 0 60 70"><path d="M5 10l50 0-6 54q-1 5-19 5T12 64z" fill="#8b8f91"/><path d="M16 22l3 44M30 22v46M44 22l-3 44" stroke="#a9adaf" stroke-width="4" opacity=".6"/><ellipse cx="30" cy="12" rx="26" ry="7" fill="#4c5052"/><path d="M6 12l8-10 7 6 8-7 6 6 8-4 8 10-8 4-8-3-8 4-9-4z" fill="#dcdedd"/><path d="M20 10l6-3 3 6zM38 9l5 4-7 1z" fill="#8e5a4c"/></svg></button>
  </nav>
</div>
</body>
</html>
```
FILE: styles.css
```css
* { box-sizing: border-box; }

body {
  margin: 0;
  font-family: Inter, "Noto Sans", sans-serif;
  background: #20272b;
  color: #fff;
  overflow: hidden;
}

button, input {
  font: inherit;
  color: inherit;
  background: none;
  border: 0;
  padding: 0;
  margin: 0;
}

a { color: inherit; text-decoration: none; }
h2, h3, h4, p, ul, dl, dd { margin: 0; padding: 0; }
svg { display: block; flex: none; }

.defs { position: absolute; width: 0; height: 0; }
.wallpaper { position: absolute; inset: 0; width: 100%; height: 100%; }

.desktop {
  position: relative;
  display: flex;
  flex-direction: column;
  height: 100vh;
}

/* Menu bar */
.menubar {
  display: flex;
  justify-content: space-between;
  align-items: center;
  height: 74px;
  padding: 0 34px 2px 36px;
  background: linear-gradient(90deg, #99a4a2 0, #97a19f 30%, #8c9392 42%, #767e7f 50%, #596264 65%, #4a545a 76%, #4a555b 100%);
  font-size: 25px;
  font-weight: 500;
  text-shadow: 0 2px 4px rgba(0, 0, 0, .3);
}
.menus, .status { display: flex; align-items: center; gap: 36px; }
.status { gap: 35px; font-size: 26px; }
.strong { font-weight: 700; }
.apple { width: 32px; height: 32px; }

/* Window */
.stage {
  flex: 1;
  min-height: 0;
  display: flex;
  position: relative;
  padding: 17px 0 0 49px;
}
.back-window {
  position: absolute;
  left: 43px;
  top: 50px;
  bottom: 36px;
  width: 60px;
  border-radius: 20px;
  border: 2px solid #3a4046;
  background: linear-gradient(#2a2b2b 0, #2a2b2b 260px, #b9b9b9 260px, #b9b9b9 422px, #1c3a22 422px, #16281f 600px, #101626 800px, #10141f 100%);
  box-shadow: 0 20px 60px rgba(0, 0, 0, .6);
}
.window {
  position: relative;
  flex: 1;
  min-width: 0;
  display: flex;
  flex-direction: column;
  padding: 0 7px 6px 8px;
  border: 2px solid #50534f;
  border-radius: 26px;
  background: #191919;
  box-shadow: 0 0 0 1px #000, 0 24px 70px 6px rgba(0, 0, 0, .55);
}

.tabstrip {
  display: flex;
  align-items: center;
  height: 81px;
  padding-left: 33px;
}
.lights { display: flex; gap: 16px; width: 142px; }
.lights button { width: 24px; height: 24px; border-radius: 50%; }
.lights .red { background: #ec6a5e; }
.lights .amber { background: #f4bf4f; }
.lights .lime { background: #61c554; }

.tabs { display: flex; align-items: center; }
.tab {
  display: flex;
  align-items: center;
  gap: 17px;
  width: 360px;
  height: 64px;
  padding: 0 18px 0 20px;
  color: #a6a6a6;
  font-size: 24px;
  position: relative;
}
.tab svg { width: 32px; height: 32px; }
.tab span {
  flex: 1;
  text-align: left;
  white-space: nowrap;
  -webkit-mask-image: linear-gradient(90deg, #000 82%, transparent 98%);
  mask-image: linear-gradient(90deg, #000 82%, transparent 98%);
}
.tab.whole span { -webkit-mask-image: none; mask-image: none; }
.tab.ruled::after {
  content: "";
  position: absolute;
  right: 0;
  top: 16px;
  bottom: 16px;
  width: 2px;
  background: #3c3d3c;
}
.tab:nth-child(-n+4) { width: 362px; padding-right: 20px; }
.tab.active {
  width: 352px;
  margin: 0 4px;
  padding: 0 14px 0 16px;
  border-radius: 16px;
  background: #3a3b3d;
  color: #f2f2f2;
}

.icon svg, .assistant svg { stroke: currentColor; stroke-width: 3; fill: none; stroke-linecap: round; stroke-linejoin: round; }
.icon { display: flex; justify-content: center; width: 32px; color: #b3b4b2; flex: none; }
.dim { opacity: .5; }
.push { margin-left: auto; }
.tabstrip > .icon:not(.push):not(.profile) { margin-left: 20px; }
.tabstrip > .profile { margin: 0 32px 0 36px; }

.chrome {
  flex: 1;
  min-height: 0;
  display: flex;
  flex-direction: column;
  overflow: hidden;
  border: 2px solid #3f403e;
  border-radius: 20px;
  background: #1f211e;
}
.toolbar {
  display: flex;
  align-items: center;
  gap: 33px;
  height: 80px;
  padding: 0 36px 0 31px;
  color: #a9aaa8;
}
.rule { width: 2px; height: 40px; background: #434542; flex: none; }
.address { flex: 1; display: flex; align-items: center; gap: 13px; margin-left: 12px; }
.toolbar .rule { margin: 0 -8px; }
.tight { margin-right: -8px; }
.address input { flex: 1; font-size: 26px; color: #a6a7a5; outline: none; }
.assistant { display: flex; align-items: center; gap: 14px; font-size: 26px; font-weight: 500; }

.bookmarks {
  display: flex;
  align-items: center;
  height: 84px;
  padding: 0 68px 2px 23px;
  border-top: 2px solid #3f403e;
  border-bottom: 2px solid #3f403e;
  color: #cfd0ce;
  font-size: 24px;
  white-space: nowrap;
}
.pill { padding: 0 16px; height: 48px; border-radius: 16px; background: #343633; color: #fff; font-weight: 600; }
.bookmarks > .icon { margin-left: 24px; }
.bookmarks > .push { margin-left: auto; }
.bookmarks .rule { margin: 0 32px 0 29px; }
.bookmarks a { display: flex; align-items: center; gap: 12px; margin-right: 50px; }
.bookmarks a svg { width: 32px; height: 32px; }
.cut { width: 212px; }
.cb, .sfr { width: 32px; height: 32px; font-style: normal; font-weight: 700; text-align: center; line-height: 32px; }
.cb { background: #fff; color: #333; font-size: 20px; }
.sfr { background: #d0302b; color: #fff; font-size: 14px; }

/* Web page */
.viewport { flex: 1; min-height: 0; display: flex; }
.page {
  flex: 1;
  min-width: 0;
  position: relative;
  display: flex;
  flex-direction: column;
  background: #0f1526;
  font-size: 32px;
  line-height: 48px;
  overflow: hidden;
}
.scrollbar { width: 20px; background: #fafaf9; padding-top: 636px; }
.scrollbar i { display: block; height: 98px; border-radius: 10px; background: #28374f; }

.site {
  display: flex;
  align-items: center;
  height: 162px;
  flex: none;
  padding: 0 56px 0 111px;
  background: linear-gradient(90deg, #f2f4f5 0, #f3f3f3 20%, #f5f6f8 35%, #f4f5f7 70%, #f2f4f5 100%);
  border-bottom: 2px solid #dde6ec;
  color: #3b4350;
  font-size: 28px;
  font-weight: 500;
  white-space: nowrap;
}
.brand { display: flex; align-items: flex-start; gap: 26px; margin-top: -8px; }
.words { display: flex; flex-direction: column; font-family: "Liberation Sans", Arial, sans-serif; }
.words b { font-size: 54px; line-height: 52px; color: #2b63be; }
.words small { font-size: 18px; line-height: 32px; font-weight: 400; letter-spacing: 3px; color: #9a9da0; }
.sitenav { display: flex; gap: 55px; margin-left: auto; }
.sitenav a { display: flex; align-items: center; }
.sitenav em {
  margin-left: 12px;
  padding: 0 13px;
  border-radius: 20px;
  background: #62c44a;
  color: #fff;
  font-style: normal;
  font-size: 24px;
  line-height: 40px;
  font-weight: 600;
}
.translate, .search { display: flex; align-items: center; }
.site button svg { fill: none; stroke: currentColor; stroke-linecap: round; stroke-linejoin: round; }
.translate {
  gap: 18px;
  height: 76px;
  margin-left: 56px;
  padding: 0 24px;
  border: 2px solid #e0e3e6;
  border-radius: 16px;
}
.search {
  gap: 16px;
  height: 68px;
  margin-left: 18px;
  padding: 0 22px;
  border-radius: 12px;
  background: #f3f4f5;
  color: #6b7078;
  font-weight: 400;
}
.search kbd {
  padding: 0 13px;
  border: 2px solid #e3e5e8;
  border-radius: 8px;
  background: #fff;
  font-family: inherit;
  font-size: 24px;
  line-height: 38px;
}
.signin { margin: 0 48px; font-size: 32px; color: #1b2433; }
.start { height: 80px; padding: 0 32px; border-radius: 16px; background: #1f293a; color: #fff; font-size: 32px; font-weight: 500; }

.sections {
  width: 100%;
  max-width: 2560px;
  margin: 0 auto;
  display: flex;
  flex-direction: column;
  gap: 96px;
}
.learn {
  padding: 2px 64px 64px;
  border: 2px solid #30384a;
  border-top: 0;
  border-radius: 0 0 24px 24px;
  background: #191f30;
  text-align: center;
}
.lead { max-width: 1536px; margin: 0 auto 64px; font-size: 40px; line-height: 56px; color: #d1d5db; }
.lead strong { color: #8fce3f; font-weight: 700; }
.features { display: grid; grid-template-columns: repeat(3, 1fr); gap: 48px; }
.feature { padding: 48px; border-radius: 16px; background: #202938; }
.feature svg { width: 96px; height: 96px; margin: 0 auto 32px; fill: none; stroke: #8cc63f; stroke-width: 2; stroke-linecap: round; stroke-linejoin: round; }
.feature h3 { margin-bottom: 24px; font-size: 40px; line-height: 56px; font-weight: 700; }
.feature p { font-size: 28px; line-height: 40px; color: #99a1ad; }

.approval {
  display: grid;
  grid-template-columns: 1fr 1fr;
  gap: 64px;
  align-items: start;
  padding: 64px;
  border: 2px solid #223a68;
  border-radius: 32px;
  background: linear-gradient(90deg, #15223f 0, #121e36 45%, #121e36 55%, #15223f 100%);
  color: #d1d5db;
}
.chip { display: inline-block; margin-bottom: 32px; padding: 8px 24px; border-radius: 24px; background: #1f315c; color: #6ea5f5; font-size: 24px; line-height: 32px; font-weight: 500; }
.approval h2 { margin-bottom: 32px; font-size: 60px; line-height: 72px; font-weight: 700; color: #fff; }
.approval ul { margin-top: 48px; display: grid; gap: 24px; list-style: none; }
.approval li { display: flex; align-items: center; gap: 16px; }
.approval li svg { width: 40px; height: 40px; fill: none; stroke: #60a5fa; stroke-width: 2; stroke-linecap: round; stroke-linejoin: round; }

.example { margin-top: 8px; padding: 48px 48px 96px; border: 2px solid #323c4d; border-radius: 24px; background: #1f2838; }
.example h4 { margin-bottom: 32px; font-size: 32px; font-weight: 700; color: #fff; }
.example dl { display: grid; gap: 24px; padding-bottom: 32px; border-bottom: 2px solid #374151; }
.example dl div { display: flex; justify-content: space-between; padding: 24px; border-radius: 16px; background: #2a3445; font-size: 28px; line-height: 40px; }
.example dd { font-weight: 600; }
.c-green { color: #a3e05a; }
.c-yellow { color: #f0cd4c; }
.c-red { color: #e2726f; }
.c-blue { color: #68a3f0; }
.c-purple { color: #b385ee; }

.chat {
  position: absolute;
  right: 48px;
  bottom: 48px;
  width: 128px;
  height: 128px;
  display: grid;
  place-items: center;
  border-radius: 50%;
  background: #64c84c;
  box-shadow: 0 8px 30px rgba(0, 0, 0, .4);
}

/* Dock */
.dock {
  position: relative;
  display: flex;
  align-items: flex-start;
  gap: 18px;
  align-self: center;
  height: 96px;
  margin: 18px 0 10px;
  padding: 13px 12px 0 12px;
  border: 2px solid #565e61;
  border-radius: 28px;
  background: linear-gradient(90deg, #2e3739 0, #3c464a 35%, #3c464a 50%, #283033 68%, #252b2e 100%);
}
.dock button { position: relative; width: 60px; height: 60px; flex: none; }
.dock svg { width: 60px; height: 60px; overflow: visible; }
.dock .on::after {
  content: "";
  position: absolute;
  left: 26px;
  top: 69px;
  width: 8px;
  height: 8px;
  border-radius: 50%;
  background: #b5babb;
}
.dock .split { width: 2px; height: 72px; margin: -3px 6px 0 10px; background: #6c7476; flex: none; }
.dock .big svg { width: 74px; height: 74px; margin: -7px; }
.dock .min { width: 70px; height: 70px; margin: -5px -5px 0; }
.dock .min svg { width: 70px; height: 70px; }
.cal, .tv { display: flex; width: 60px; height: 60px; border-radius: 14px; overflow: hidden; }
.cal { flex-direction: column; background: #f6f5f1; color: #2b2d2e; }
.cal small { background: #dc4b42; color: #fff; font-size: 13px; line-height: 18px; font-weight: 500; }
.cal b { font-size: 38px; line-height: 40px; font-weight: 300; }
.tv { align-items: center; justify-content: center; gap: 2px; background: #11191a; font-size: 22px; font-weight: 600; }
.dock .tv svg { width: 16px; height: 20px; }
```
